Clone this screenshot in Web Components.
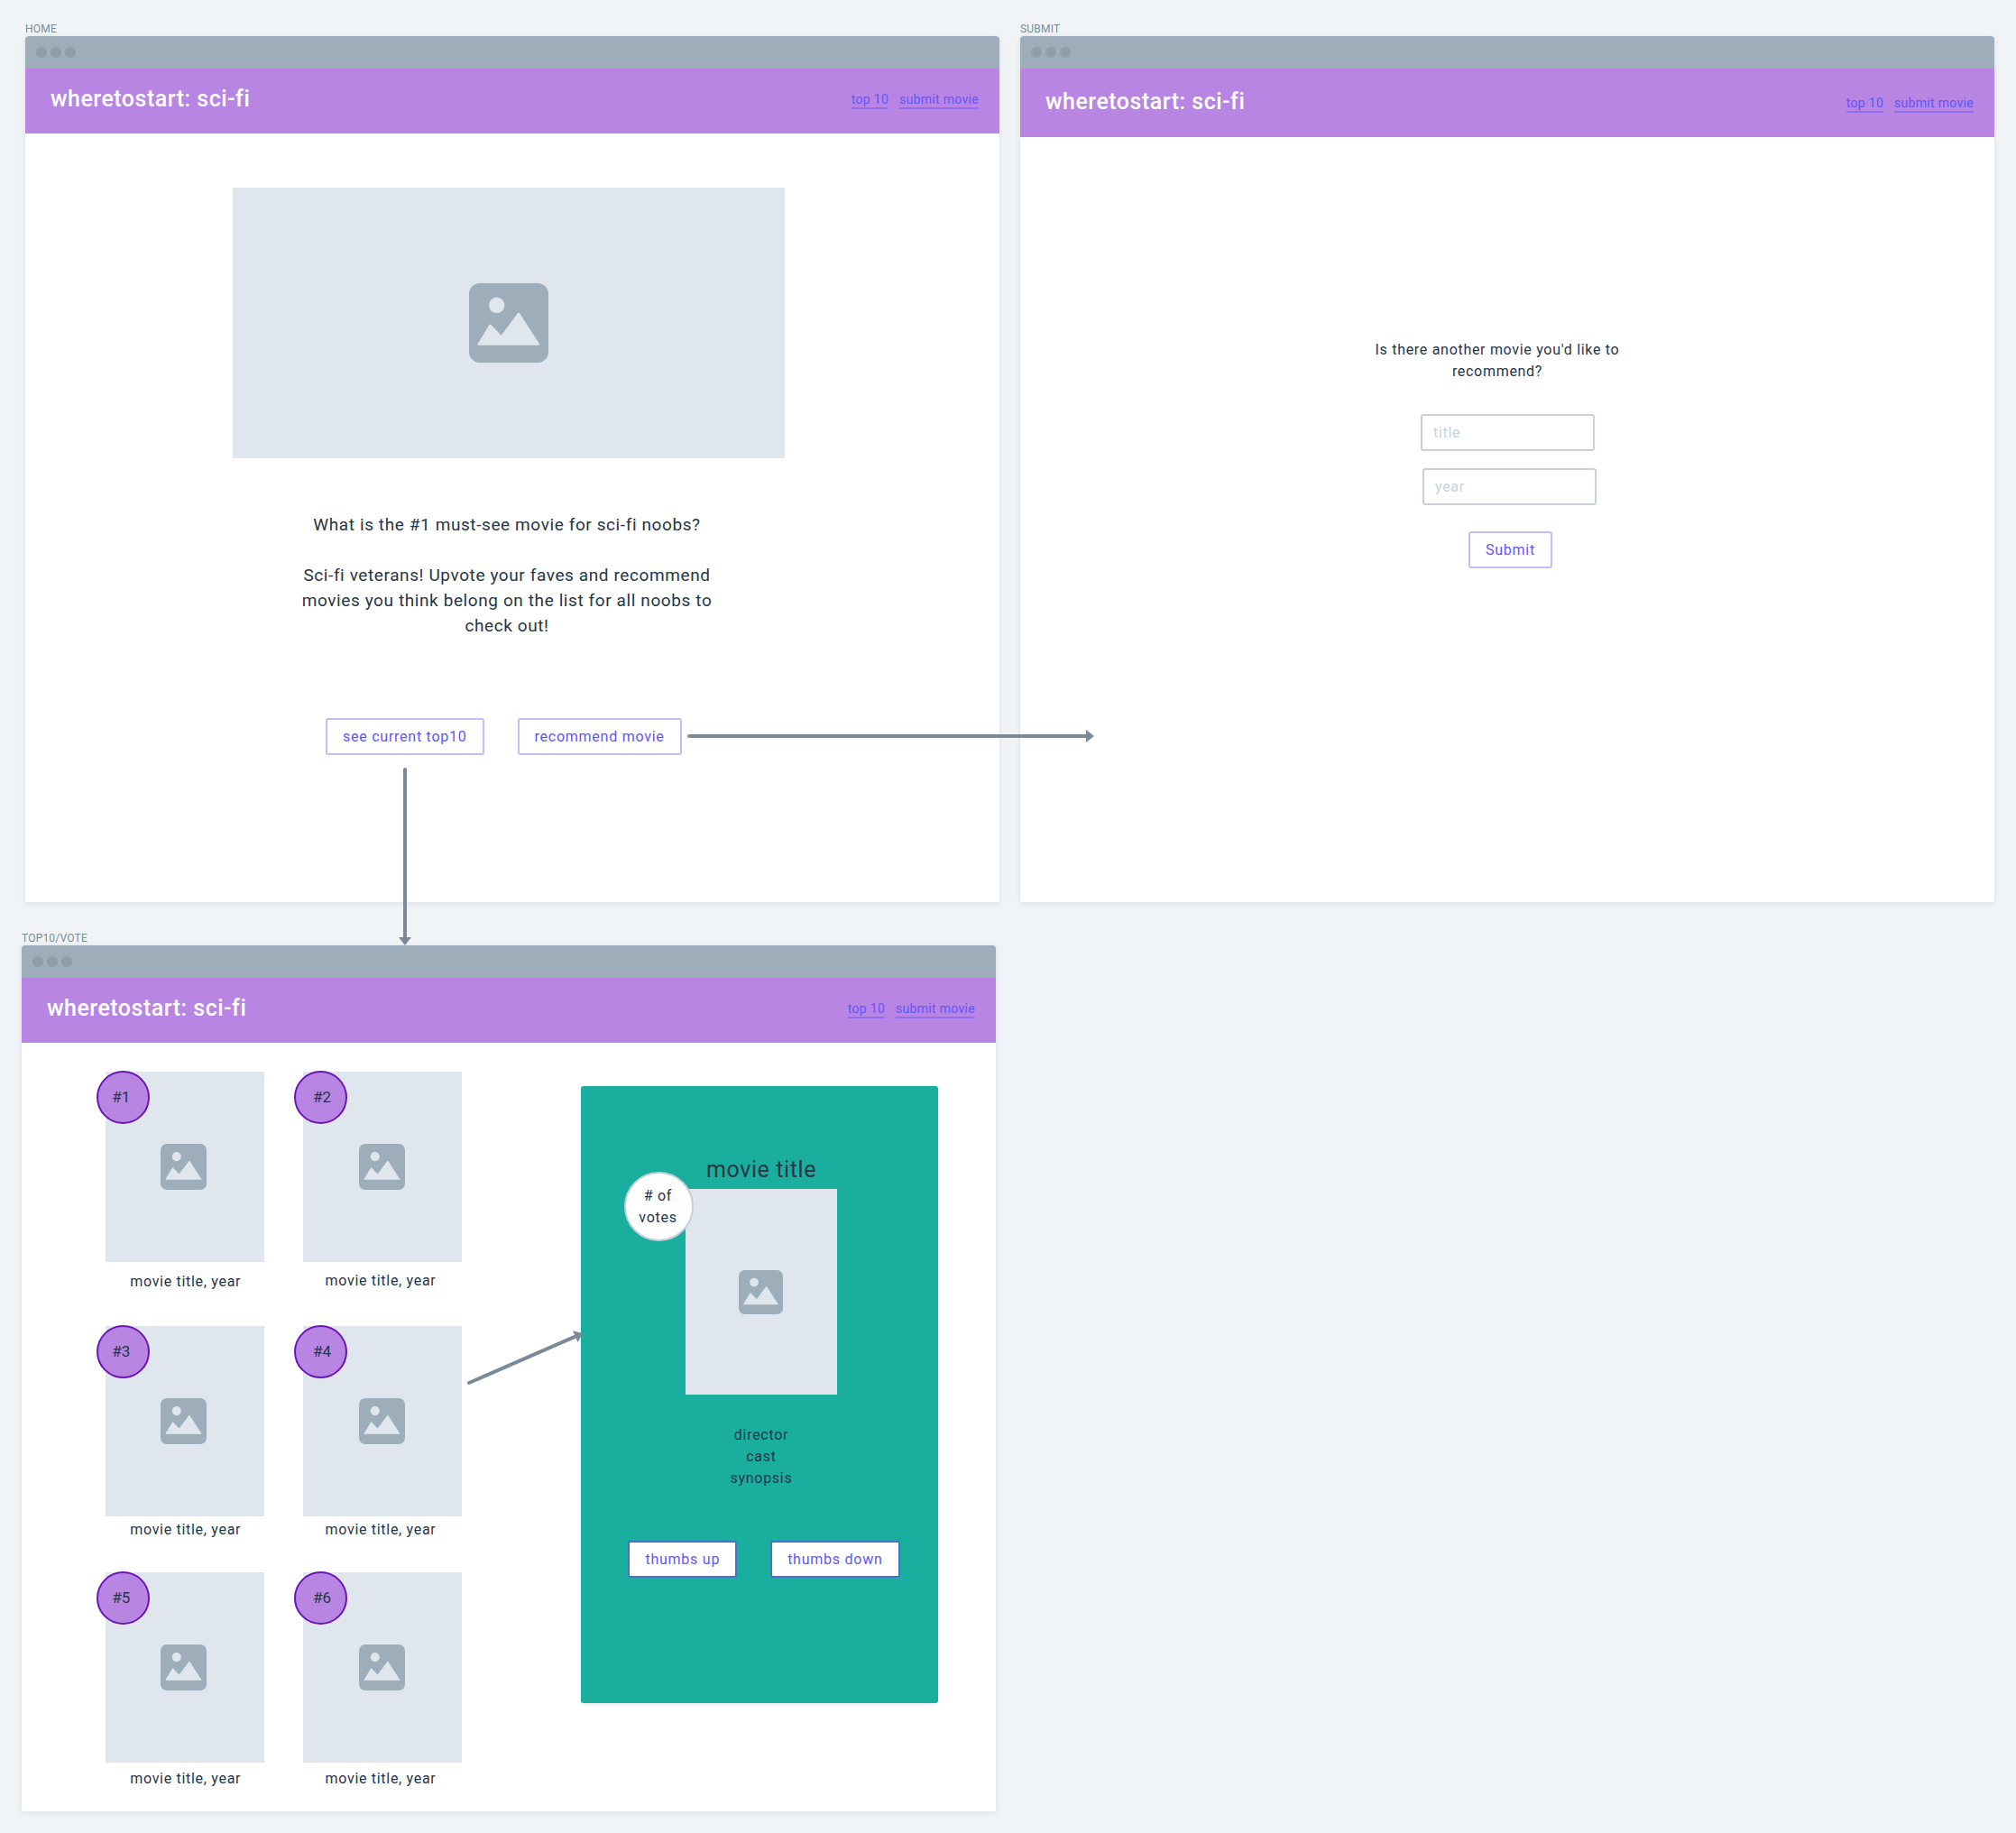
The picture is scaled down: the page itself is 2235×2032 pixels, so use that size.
<!DOCTYPE html>
<html>
<head>
<meta charset="utf-8">
<title>wheretostart wireframes</title>
<style>
  html, body { margin: 0; background: #f0f4f7; }
  body { font-family: Roboto, "Liberation Sans", sans-serif; color: #263647; }
</style>
</head>
<body>
<wire-board>
  <wire-frame x="28" y="24" h="976" label="HOME">
    <home-screen></home-screen>
  </wire-frame>
  <wire-frame x="1131" y="24" h="976" label="SUBMIT" header="76" lift="1" navdrop="4">
    <submit-screen></submit-screen>
  </wire-frame>
  <wire-frame x="24" y="1032" h="976" label="TOP10/VOTE">
    <top-screen></top-screen>
  </wire-frame>
  <flow-arrow x1="764" y1="816" x2="1213" y2="816"></flow-arrow>
  <flow-arrow x1="449" y1="853" x2="449" y2="1048"></flow-arrow>
  <flow-arrow x1="520" y1="1533" x2="646" y2="1478"></flow-arrow>
</wire-board>

<script>
class wireBoard extends HTMLElement {
    constructor() {
        super();
        this.attachShadow({ mode: "open" });
        this.shadowRoot.innerHTML = `
            <style>
                :host { display: block; position: relative; width: 2235px; height: 2032px; overflow: hidden; }
            </style>
            <slot></slot>
        `;
    }
}
customElements.define("wire-board", wireBoard);

class wireFrame extends HTMLElement {
    constructor() {
        super();
        this.attachShadow({ mode: "open" });
    }

    connectedCallback() {
        const x = this.getAttribute("x");
        const y = this.getAttribute("y");
        const h = this.getAttribute("h");
        const header = this.getAttribute("header") || 72;
        const lift = this.getAttribute("lift") || 3;
        const navdrop = this.getAttribute("navdrop") || 2;
        this.shadowRoot.innerHTML = `
            <style>
                :host {
                    display: flex;
                    flex-direction: column;
                    position: absolute;
                    left: ${x}px;
                    top: ${y}px;
                    width: 1080px;
                    height: ${h}px;
                }
                .label {
                    height: 16px;
                    line-height: 16px;
                    font-size: 12px;
                    letter-spacing: 0.2px;
                    color: #7b8a99;
                    text-transform: uppercase;
                }
                .window {
                    flex: 1;
                    display: flex;
                    flex-direction: column;
                    background: #fff;
                    border-radius: 4px 4px 0 0;
                    box-shadow: 0 1px 6px rgba(100, 120, 140, 0.16);
                }
                .bar {
                    height: 36px;
                    display: flex;
                    align-items: center;
                    gap: 4px;
                    padding-left: 12px;
                    background: #9eadba;
                    border-radius: 4px 4px 0 0;
                }
                .bar i { width: 12px; height: 12px; border-radius: 50%; background: #8d9dab; }
                header {
                    height: ${header}px;
                    display: flex;
                    align-items: center;
                    justify-content: space-between;
                    padding: 0 23px ${lift}px 28px;
                    box-sizing: border-box;
                    background: #b885e2;
                }
                .brand { margin-bottom: 3px; font-size: 25px; font-weight: 500; letter-spacing: 0.5px; color: #fff; }
                nav { display: flex; gap: 12px; margin-top: ${navdrop}px; font-size: 14px; color: #5f55ff; }
                nav span { border-bottom: 2px solid rgba(95, 85, 255, 0.45); line-height: 17px; letter-spacing: 0.3px; }
                main { flex: 1; }
            </style>
            <div class="label">${this.getAttribute("label")}</div>
            <div class="window">
                <div class="bar"><i></i><i></i><i></i></div>
                <header>
                    <div class="brand">wheretostart: sci-fi</div>
                    <nav><span>top 10</span><span>submit movie</span></nav>
                </header>
                <main><slot></slot></main>
            </div>
        `;
    }
}
customElements.define("wire-frame", wireFrame);

class imageHolder extends HTMLElement {
    constructor() {
        super();
        this.attachShadow({ mode: "open" });
    }

    connectedCallback() {
        const w = this.getAttribute("w");
        const h = this.getAttribute("h");
        const icon = this.getAttribute("icon");
        const shift = this.getAttribute("shift") || 0;
        this.shadowRoot.innerHTML = `
            <style>
                :host {
                    display: flex;
                    align-items: center;
                    justify-content: center;
                    box-sizing: border-box;
                    flex: none;
                    width: ${w}px;
                    height: ${h}px;
                    padding-right: ${shift}px;
                    background: #dfe6ee;
                }
                svg { display: block; width: ${icon}px; height: ${icon}px; }
            </style>
            <svg viewBox="0 0 88 88">
                <rect width="88" height="88" rx="12" fill="#9eadba"/>
                <circle cx="30.7" cy="24.3" r="8.7" fill="#dfe6ee"/>
                <path d="M10.5 67.7 23.3 46.5 35.7 59.3 55 33.5 77.2 67.7Z" fill="#dfe6ee" stroke="#dfe6ee" stroke-width="2" stroke-linejoin="round"/>
            </svg>
        `;
    }
}
customElements.define("image-holder", imageHolder);

class wireButton extends HTMLElement {
    constructor() {
        super();
        this.attachShadow({ mode: "open" });
        this.shadowRoot.innerHTML = `
            <style>
                :host {
                    display: inline-flex;
                    align-items: center;
                    justify-content: center;
                    box-sizing: border-box;
                    height: 41px;
                    padding: 0 17px;
                    background: #fff;
                    border: 2px solid var(--btn-border, #c3bdff);
                    border-radius: 3px;
                    font-size: 16px;
                    color: #5f55ff;
                    letter-spacing: 0.75px;
                    white-space: nowrap;
                }
            </style>
            <slot></slot>
        `;
    }
}
customElements.define("wire-button", wireButton);

class wireInput extends HTMLElement {
    constructor() {
        super();
        this.attachShadow({ mode: "open" });
        this.shadowRoot.innerHTML = `
            <style>
                :host {
                    display: flex;
                    align-items: center;
                    box-sizing: border-box;
                    width: 193px;
                    height: 41px;
                    padding-left: 12px;
                    border: 2px solid #c8d1db;
                    border-radius: 3px;
                    font-size: 16px;
                    letter-spacing: 0.7px;
                    color: #c8d3df;
                }
            </style>
            <slot></slot>
        `;
    }
}
customElements.define("wire-input", wireInput);

class homeScreen extends HTMLElement {
    constructor() {
        super();
        this.attachShadow({ mode: "open" });
        this.shadowRoot.innerHTML = `
            <style>
                :host { display: block; padding: 60px 0 0 230px; }
                .copy {
                    width: 612px;
                    margin-top: 60px;
                    margin-left: -2px;
                    font-size: 19px;
                    letter-spacing: 0.6px;
                    line-height: 28px;
                    text-align: center;
                }
                .actions { display: flex; gap: 37px; margin: 88px 0 0 103px; }
            </style>
            <image-holder w="612" h="300" icon="88"></image-holder>
            <div class="copy">
                What is the #1 must-see movie for sci-fi noobs?<br><br>
                Sci-fi veterans! Upvote your faves and recommend<br>
                movies you think belong on the list for all noobs to<br>
                check out!
            </div>
            <div class="actions">
                <wire-button>see current top10</wire-button>
                <wire-button>recommend movie</wire-button>
            </div>
        `;
    }
}
customElements.define("home-screen", homeScreen);

class submitScreen extends HTMLElement {
    constructor() {
        super();
        this.attachShadow({ mode: "open" });
        this.shadowRoot.innerHTML = `
            <style>
                :host { display: block; padding-top: 224px; }
                p { width: 1058px; margin: 0 0 35px; font-size: 16px; letter-spacing: 0.7px; line-height: 24px; text-align: center; }
                wire-input { margin: 0 0 19px 444px; }
                wire-input + wire-input { margin-left: 446px; margin-bottom: 29px; }
                wire-button { margin-left: 497px; }
            </style>
            <p>Is there another movie you'd like to<br>recommend?</p>
            <wire-input>title</wire-input>
            <wire-input>year</wire-input>
            <wire-button>Submit</wire-button>
        `;
    }
}
customElements.define("submit-screen", submitScreen);

class movieCard extends HTMLElement {
    constructor() {
        super();
        this.attachShadow({ mode: "open" });
    }

    connectedCallback() {
        const rank = +this.getAttribute("rank");
        const left = rank % 2 === 1;
        this.shadowRoot.innerHTML = `
            <style>
                :host { display: block; position: relative; width: 176px; }
                .rank {
                    position: absolute;
                    left: -9.5px;
                    top: -1px;
                    box-sizing: border-box;
                    width: 59px;
                    height: 59px;
                    padding: 0 ${left ? 5 : 0}px 2px ${left ? 0 : 2}px;
                    display: flex;
                    align-items: center;
                    justify-content: center;
                    background: #b885e2;
                    border: 2px solid #6b14b8;
                    border-radius: 50%;
                    font-size: 17px;
                }
                .caption {
                    margin-top: ${this.getAttribute("gap")}px;
                    padding: 0 ${left ? 0 : 4}px 0 ${left ? 2 : 0}px;
                    font-size: 16px;
                    letter-spacing: 0.7px;
                    line-height: 24px;
                    text-align: center;
                }
            </style>
            <image-holder w="176" h="211" icon="51" shift="${left ? 2 : 0}"></image-holder>
            <div class="rank">#${rank}</div>
            <div class="caption">movie title, year</div>
        `;
    }
}
customElements.define("movie-card", movieCard);

class votePanel extends HTMLElement {
    constructor() {
        super();
        this.attachShadow({ mode: "open" });
        this.shadowRoot.innerHTML = `
            <style>
                :host {
                    display: flex;
                    flex-direction: column;
                    align-items: center;
                    position: relative;
                    box-sizing: border-box;
                    flex: none;
                    width: 396px;
                    height: 684px;
                    padding: 79px 0 0 4px;
                    background: #1aae9f;
                    border-radius: 3px;
                    box-shadow: 0 1px 4px rgba(100, 120, 140, 0.2);
                    letter-spacing: 0.7px;
                }
                h2 { margin: 0 0 7px; font-size: 25px; line-height: 28px; font-weight: 400; letter-spacing: 0.6px; }
                .votes {
                    position: absolute;
                    left: 48px;
                    top: 95px;
                    box-sizing: border-box;
                    width: 77px;
                    height: 77px;
                    padding-right: 2px;
                    display: flex;
                    align-items: center;
                    justify-content: center;
                    background: #fff;
                    border: 2px solid #c3cfdb;
                    border-radius: 50%;
                    font-size: 16px;
                    line-height: 24px;
                    text-align: center;
                }
                .details { margin-top: 33px; font-size: 16px; line-height: 24px; text-align: center; }
                .actions { display: flex; gap: 37px; margin: 57px 0 0 6px; --btn-border: #3f74cf; }
            </style>
            <h2>movie title</h2>
            <image-holder w="168" h="228" icon="49"></image-holder>
            <div class="votes"># of<br>votes</div>
            <div class="details">director<br>cast<br>synopsis</div>
            <div class="actions">
                <wire-button>thumbs up</wire-button>
                <wire-button>thumbs down</wire-button>
            </div>
        `;
    }
}
customElements.define("vote-panel", votePanel);

class topScreen extends HTMLElement {
    constructor() {
        super();
        this.attachShadow({ mode: "open" });
        this.shadowRoot.innerHTML = `
            <style>
                :host { display: flex; align-items: flex-start; padding-left: 92.7px; }
                .grid {
                    display: grid;
                    grid-template-columns: 176px 176px;
                    column-gap: 43.3px;
                    padding-top: 32px;
                }
                .row2 { margin-top: 37px; }
                .row3 { margin-top: 35px; }
                vote-panel { margin: 48px 0 0 132px; }
            </style>
            <div class="grid">
                <movie-card rank="1" gap="10"></movie-card>
                <movie-card rank="2" gap="9"></movie-card>
                <movie-card class="row2" rank="3" gap="3"></movie-card>
                <movie-card class="row2" rank="4" gap="3"></movie-card>
                <movie-card class="row3" rank="5" gap="6"></movie-card>
                <movie-card class="row3" rank="6" gap="6"></movie-card>
            </div>
            <vote-panel></vote-panel>
        `;
    }
}
customElements.define("top-screen", topScreen);

class flowArrow extends HTMLElement {
    constructor() {
        super();
        this.attachShadow({ mode: "open" });
    }

    connectedCallback() {
        const x1 = +this.getAttribute("x1"), y1 = +this.getAttribute("y1");
        const x2 = +this.getAttribute("x2"), y2 = +this.getAttribute("y2");
        const len = Math.hypot(x2 - x1, y2 - y1);
        const ux = (x2 - x1) / len, uy = (y2 - y1) / len;
        const bx = x2 - ux * 9, by = y2 - uy * 9;
        const head = `${x2},${y2} ${bx - uy * 7},${by + ux * 7} ${bx + uy * 7},${by - ux * 7}`;
        this.shadowRoot.innerHTML = `
            <style>
                :host { position: absolute; inset: 0; pointer-events: none; }
                svg { display: block; }
            </style>
            <svg width="2235" height="2032">
                <line x1="${x1}" y1="${y1}" x2="${bx}" y2="${by}" stroke="#7b8a99" stroke-width="4" stroke-linecap="round"/>
                <polygon points="${head}" fill="#7b8a99"/>
            </svg>
        `;
    }
}
customElements.define("flow-arrow", flowArrow);
</script>
</body>
</html>
